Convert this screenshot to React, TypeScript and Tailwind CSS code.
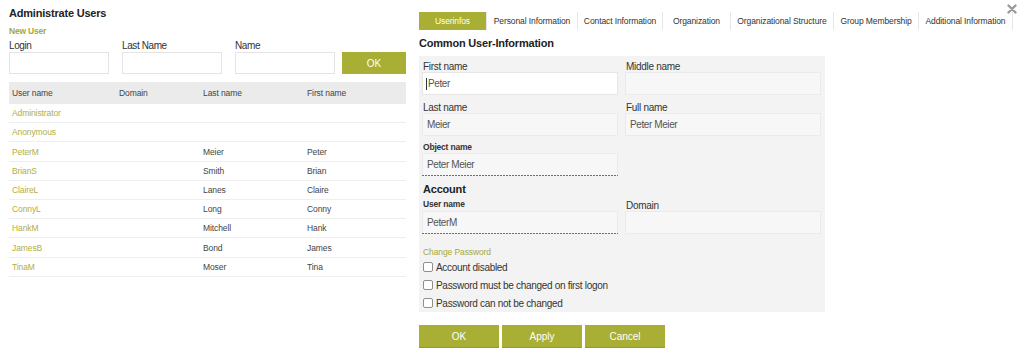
const olive = 'bg-[#a9ae34]';

const users = [
  { login: 'Administrator', domain: '', last: '', first: '' },
  { login: 'Anonymous', domain: '', last: '', first: '' },
  { login: 'PeterM', domain: '', last: 'Meier', first: 'Peter' },
  { login: 'BrianS', domain: '', last: 'Smith', first: 'Brian' },
  { login: 'ClaireL', domain: '', last: 'Lanes', first: 'Claire' },
  { login: 'ConnyL', domain: '', last: 'Long', first: 'Conny' },
  { login: 'HankM', domain: '', last: 'Mitchell', first: 'Hank' },
  { login: 'JamesB', domain: '', last: 'Bond', first: 'James' },
  { login: 'TinaM', domain: '', last: 'Moser', first: 'Tina' },
];

const tabs = [
  { label: 'Userinfos', w: 'w-[68px]' },
  { label: 'Personal Information', w: 'w-[91px]' },
  { label: 'Contact Information', w: 'w-[85px]' },
  { label: 'Organization', w: 'w-[68px]' },
  { label: 'Organizational Structure', w: 'w-[103px]' },
  { label: 'Group Membership', w: 'w-[85px]' },
  { label: 'Additional Information', w: 'w-[94px]' },
];

function Input({ value, focused, invalid }: { value?: string; focused?: boolean; invalid?: boolean }) {
  if (invalid) {
    return (
      <div className="flex flex-col">
        <div className="flex h-[22px] items-center border-x border-t border-[#ebebeb] bg-[#f7f7f7] pl-[4px] text-[10px] tracking-[-0.4px] text-[#555]">
          {value}
        </div>
        <div className="h-px bg-[repeating-linear-gradient(90deg,#f03a3a_0px,#f03a3a_2px,transparent_2px,transparent_3px)]" />
      </div>
    );
  }
  return (
    <div
      className={`flex h-[23px] items-center border pl-[4px] text-[10px] tracking-[-0.4px] text-[#555] ${
        focused ? 'border-[#e6e6e6] bg-white' : 'border-[#ebebeb] bg-[#f7f7f7]'
      }`}
    >
      {focused && <span className="mr-[1px] ml-[-1px] h-[12px] w-[1px] bg-[#333]" />}
      {value}
    </div>
  );
}

function Field({ label, value, bold, focused, invalid }: { label: string; value?: string; bold?: boolean; focused?: boolean; invalid?: boolean }) {
  return (
    <div className="flex flex-col">
      {bold ? (
        <div className="h-[11px] pl-[1px] text-[8.5px] font-bold leading-[11px] tracking-[-0.2px] text-[#333]">{label}</div>
      ) : (
        <div className="h-[13px] pl-[1px] text-[10px] leading-[15px] tracking-[-0.3px] text-[#333]">{label}</div>
      )}
      <Input value={value} focused={focused} invalid={invalid} />
    </div>
  );
}

function Check({ label }: { label: string }) {
  return (
    <div className="flex h-[18px] items-center gap-[3px] pl-[1px]">
      <span className="h-[10px] w-[10px] rounded-[2px] border border-[#8f8f8f] bg-white" />
      <span className="text-[10px] tracking-[-0.3px] text-[#333]">{label}</span>
    </div>
  );
}

function App() {
  return (
    <div className="relative flex h-[358px] w-[1024px] bg-white pl-[9px] font-['Liberation_Sans',Arial,sans-serif]">
      {/* left: user list */}
      <div className="flex w-[397px] shrink-0 flex-col">
        <h1 className="mt-[6px] h-[14px] text-[11px] font-bold leading-[14px] tracking-[-0.2px] text-[#222]">Administrate Users</h1>
        <div className="mt-[6px] h-[11px] text-[8.5px] font-bold leading-[11px] tracking-[-0.2px] text-[#a7a93a]">New User</div>
        <div className="mt-[2px] flex">
          {['Login', 'Last Name', 'Name'].map((l, i) => (
            <div key={l} className={`flex ${i < 2 ? 'w-[113px]' : 'w-[107px]'} shrink-0 flex-col`}>
              <div className="h-[13px] text-[10px] leading-[14px] tracking-[-0.4px] text-[#333]">{l}</div>
              <div className="h-[22px] w-[100px] border border-[#e4e4e4] bg-white" />
            </div>
          ))}
          <div className="flex flex-col">
            <div className="h-[13px]" />
            <button className={`h-[22px] w-[64px] ${olive} text-[10px] text-white`}>OK</button>
          </div>
        </div>
        <div className="mt-[8px]">
          <div className="grid h-[22px] grid-cols-[107px_84px_104px_1fr] items-center bg-[#ebebeb] pl-[3px] pt-[1px] text-[8.5px] tracking-[-0.1px] text-[#444]">
            <span>User name</span>
            <span>Domain</span>
            <span>Last name</span>
            <span>First name</span>
          </div>
          {users.map((u) => (
            <div key={u.login} className="grid h-[19.2px] grid-cols-[107px_84px_104px_1fr] items-center border-b border-[#efefef] pl-[3px] pt-[1px] text-[8.5px] tracking-[-0.1px] text-[#444]">
              <span className="text-[#b0ae48]">{u.login}</span>
              <span>{u.domain}</span>
              <span>{u.last}</span>
              <span>{u.first}</span>
            </div>
          ))}
        </div>
      </div>

      {/* right: user detail */}
      <div className="ml-[13px] flex flex-col">
        <div className="mt-[12px] flex h-[18px]">
          {tabs.map((t, i) => (
            <div
              key={t.label}
              className={`flex ${t.w} shrink-0 items-center justify-center border-r border-[#e6e6e6] text-[8.5px] tracking-[-0.1px] ${
                i === 0 ? `${olive} text-white` : 'bg-white text-[#333]'
              }`}
            >
              {t.label}
            </div>
          ))}
        </div>
        <h2 className="mt-[6px] h-[14px] text-[11px] font-bold leading-[14px] tracking-[-0.2px] text-[#222]">Common User-Information</h2>
        <div className="mt-[6px] w-[406px] bg-[#f3f3f3] pl-[3px] pt-[3px]">
          <div className="grid grid-cols-[196px_196px] gap-x-[7px] gap-y-[5px]">
            <Field label="First name" value="Peter" focused />
            <Field label="Middle name" />
            <Field label="Last name" value="Meier" />
            <Field label="Full name" value="Peter Meier" />
          </div>
          <div className="mt-[6px] w-[196px]">
            <Field label="Object name" value="Peter Meier" bold invalid />
          </div>
          <div className="mt-[6px] h-[14px] pl-[1px] text-[11px] font-bold leading-[14px] tracking-[-0.2px] text-[#222]">Account</div>
          <div className="mt-[3px] grid grid-cols-[196px_196px] gap-x-[7px]">
            <div className="flex flex-col">
              <div className="h-[12px] pl-[1px] text-[8.5px] font-bold leading-[11px] tracking-[-0.2px] text-[#333]">User name</div>
              <Input value="PeterM" invalid />
            </div>
            <div className="flex flex-col">
              <div className="h-[12px] pl-[1px] text-[10px] leading-[14px] tracking-[-0.3px] text-[#333]">Domain</div>
              <Input />
            </div>
          </div>
          <div className="mt-[13px] h-[11px] pl-[1px] text-[8.5px] leading-[11px] tracking-[-0.1px] text-[#a7a93a]">Change Password</div>
          <Check label="Account disabled" />
          <Check label="Password must be changed on first logon" />
          <Check label="Password can not be changed" />
        </div>
        <div className="mt-[13px] flex gap-[3px]">
          {['OK', 'Apply', 'Cancel'].map((b) => (
            <button key={b} className={`h-[23px] w-[80px] border-b border-[#959a2a] ${olive} text-[10px] text-white`}>
              {b}
            </button>
          ))}
        </div>
      </div>

      <svg className="absolute left-[1007px] top-[4px]" width="10" height="10" viewBox="0 0 10 10">
        <path d="M1.5 1.5 L8.5 8.5 M8.5 1.5 L1.5 8.5" stroke="#9a9a9a" strokeWidth="2.4" strokeLinecap="round" />
      </svg>
    </div>
  );
}

export default App;
